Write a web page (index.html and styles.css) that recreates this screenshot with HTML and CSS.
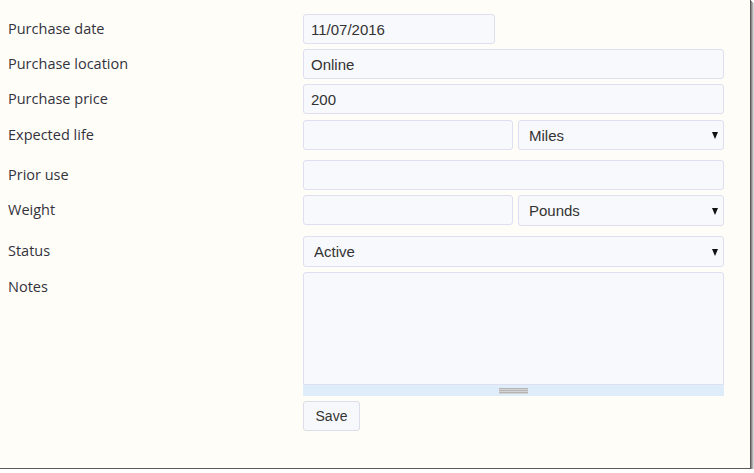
FILE: index.html
```html
<!DOCTYPE html>
<html>
<head>
<meta charset="utf-8">
<link rel="stylesheet" href="styles.css">
</head>
<body>
<div class="frame">
  <form class="form">
    <label class="lbl">Purchase date</label>
    <div class="ctl"><input class="field short" value="11/07/2016"></div>

    <label class="lbl">Purchase location</label>
    <div class="ctl"><input class="field" value="Online"></div>

    <label class="lbl">Purchase price</label>
    <div class="ctl gap-small"><input class="field" value="200"></div>

    <label class="lbl">Expected life</label>
    <div class="ctl pair gap-after">
      <input class="field half" value="">
      <span class="sel half"><select class="field"><option>Miles</option></select></span>
    </div>

    <label class="lbl">Prior use</label>
    <div class="ctl"><input class="field" value=""></div>

    <label class="lbl">Weight</label>
    <div class="ctl pair gap-after">
      <input class="field half" value="">
      <span class="sel half"><select class="field tall"><option>Pounds</option></select></span>
    </div>

    <label class="lbl">Status</label>
    <div class="ctl"><span class="sel"><select class="field tall"><option>Active</option></select></span></div>

    <label class="lbl">Notes</label>
    <div class="ctl notes">
      <textarea class="area"></textarea>
      <div class="resize"><span class="grip"></span></div>
      <button type="button" class="btn">Save</button>
    </div>
  </form>
</div>
</body>
</html>
```
FILE: styles.css
```css
html, body {
  margin: 0;
  padding: 0;
  background: #ffffff;
}
.frame {
  width: 750px;
  height: 468px;
  background: #fffdf8;
  border-right: 1px solid #5a5a5a;
  border-bottom: 1px solid #5a5a5a;
  box-shadow: 1px 1px 0 #8a8a8a, 2px 2px 0 #b0b0b0, 3px 3px 1px #d4d4d4;
  overflow: hidden;
}
.form {
  display: grid;
  grid-template-columns: 295px 421px;
  padding: 14px 0 0 8px;
  row-gap: 5px;
  align-items: start;
}
.lbl {
  font-family: "Open Sans", sans-serif;
  font-size: 14.5px;
  line-height: 30px;
  color: #33333d;
}
.ctl {
  display: flex;
}
.gap-small {
  margin-bottom: 1px;
}
.field {
  box-sizing: border-box;
  height: 30px;
  width: 421px;
  margin: 0;
  padding: 0 7px;
  background: #f8f9fc;
  border: 1px solid #dedff0;
  border-radius: 3px;
  font-family: "Liberation Sans", Arial, sans-serif;
  font-size: 15px;
  color: #333;
  outline: none;
}
.field.short {
  width: 192px;
}
.pair {
  gap: 5px;
}
.gap-after {
  margin-bottom: 5px;
}
.pair .half {
  width: 210px;
}
.pair .sel.half {
  width: 206px;
}
.sel {
  position: relative;
  display: block;
  width: 421px;
}
.sel select {
  width: 100%;
  appearance: none;
  -webkit-appearance: none;
  padding: 0 10px;
}
.sel select.tall {
  height: 31px;
}
.sel::after {
  content: "";
  position: absolute;
  right: 6px;
  top: 50%;
  margin-top: -3px;
  border-left: 3.5px solid transparent;
  border-right: 3.5px solid transparent;
  border-top: 7px solid #111;
}
.notes {
  flex-direction: column;
  align-items: flex-start;
}
.area {
  box-sizing: border-box;
  width: 421px;
  height: 113px;
  margin: 0;
  background: #f8f9fc;
  border: 1px solid #dedff0;
  border-radius: 3px 3px 0 0;
  resize: none;
  outline: none;
}
.resize {
  width: 421px;
  height: 11px;
  background: #dfedfb;
  display: flex;
  justify-content: center;
  align-items: center;
}
.grip {
  display: block;
  width: 29px;
  height: 6px;
  background: repeating-linear-gradient(to bottom, #b4b4b4 0, #b4b4b4 1px, #d4d4d4 1px, #d4d4d4 2px);
}
.btn {
  margin-top: 5px;
  box-sizing: border-box;
  width: 57px;
  height: 30px;
  background: #f7f8fb;
  border: 1px solid #dcdde8;
  border-radius: 3px;
  font-family: "Liberation Sans", Arial, sans-serif;
  font-size: 14px;
  color: #333;
  padding: 0;
}
```
